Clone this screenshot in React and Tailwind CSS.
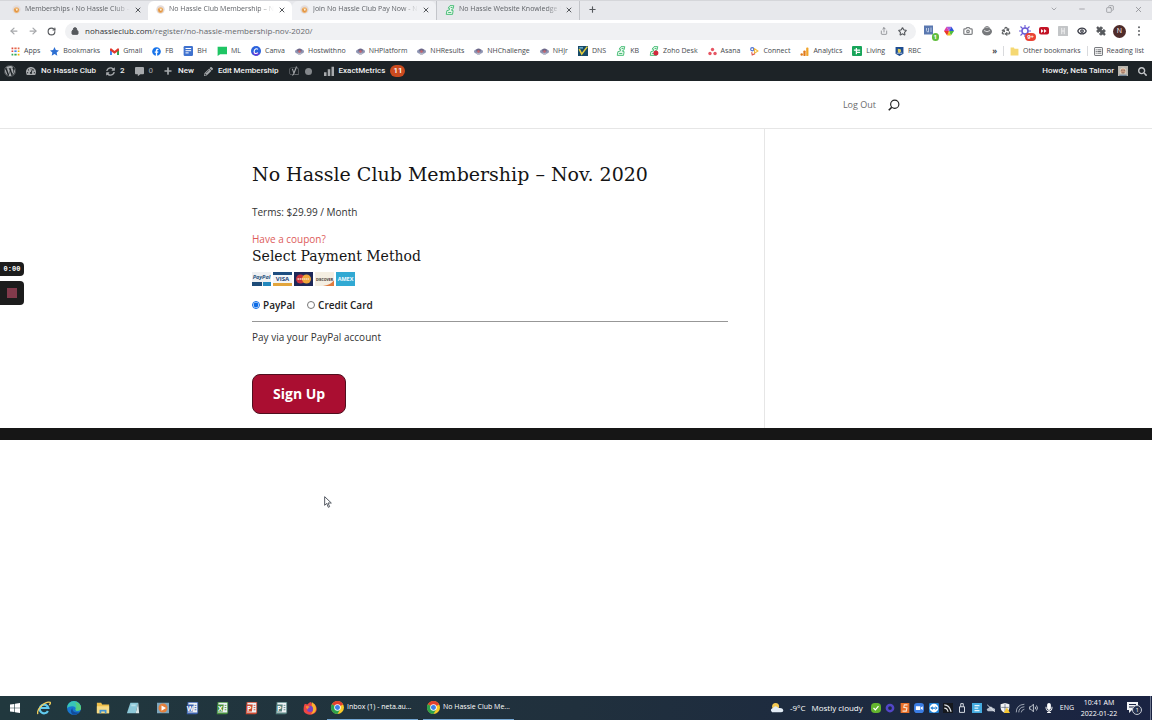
import { useState } from "react";
import {
  ArrowLeft,
  ArrowRight,
  Camera,
  ChevronDown,
  Copy,
  Eye,
  Lock,
  Minus,
  Plus,
  Puzzle,
  Recycle,
  RotateCw,
  Share,
  Star,
  X,
} from "lucide-react";
import {
  FaWordpress,
  FaTachometerAlt,
  FaSyncAlt,
  FaCommentAlt,
  FaPencilAlt,
  FaSearch,
  FaMicrophone,
  FaFacebook,
  FaYoast,
} from "react-icons/fa";

/* ---------- favicons ---------- */

const ClubIcon = () => (
  <svg viewBox="0 0 16 16" className="h-[9px] w-[9px] shrink-0">
    <circle cx="8" cy="8" r="7.500" fill="#e3dcdc" />
    <circle cx="8" cy="9" r="5" fill="#eeb471" />
    <path d="M4 7h8l-1 4-3 2-3-2z" fill="#e0913f" />
    <circle cx="8.500" cy="8.500" r="1.800" fill="#fdf0d6" />
  </svg>
);

const KbIcon = ({ dot }) => (
  <svg viewBox="0 0 16 16" className="h-[10px] w-[10px] shrink-0">
    <path
      d="M8 1h6l-1 5-3 2 3 1-1 6H2l1-6 4-1V5H5z"
      fill="#e6f7ec"
      stroke="#45bd74"
      strokeWidth="1.500"
    />
    <path d="M5 12h5M9 4h3" stroke="#45bd74" strokeWidth="1.500" />
    {dot && <circle cx="11" cy="11" r="4" fill="#d2273c" />}
  </svg>
);

const AppsIcon = () => (
  <svg viewBox="0 0 16 16" className="h-[9px] w-[9px] shrink-0">
    <path d="M1 1h3v3H1zM1 6h3v3H1z" fill="#e0493c" />
    <path d="M6 1h4v3H6zM12 1h3v3h-3z" fill="#e66a4c" />
    <path d="M6 6h4v3H6z" fill="#4285f4" />
    <path d="M12 6h3v3h-3zM12 12h3v3h-3z" fill="#f4b400" />
    <path d="M1 12h3v3H1zM6 12h4v3H6z" fill="#34a853" />
  </svg>
);

const StarIcon = () => (
  <svg viewBox="0 0 16 16" className="h-[9px] w-[9px] shrink-0">
    <path
      d="M8 0l2.4 5.4 5.6.6-4.200 3.900L13 15.500 8 12.600 3 15.500l1.200-5.600L0 6l5.600-.6z"
      fill="#2d6fd2"
    />
  </svg>
);

const GmailIcon = () => (
  <svg viewBox="0 0 16 14" className="h-[9px] w-[9px] shrink-0">
    <path d="M0 3h3.500v10H0z" fill="#4285f4" />
    <path d="M12.500 3H16v10h-3.500z" fill="#34a853" />
    <path d="M0 2l2-1 6 5 6-5 2 1v3l-8 6-8-6z" fill="#e0392d" />
  </svg>
);

const FbIcon = () => (
  <FaFacebook className="h-[9px] w-[9px] shrink-0 text-[#1773ea]" />
);

const DocIcon = () => (
  <svg viewBox="0 0 16 16" className="h-[10px] w-[10px] shrink-0">
    <rect x="1" y="0" width="15" height="16" rx="2" fill="#3f72cf" />
    <path d="M4 4h9M4 7.500h9M4 11h5" stroke="#fff" strokeWidth="1.600" />
  </svg>
);

const MlIcon = () => (
  <svg viewBox="0 0 16 16" className="h-[10px] w-[10px] shrink-0">
    <path d="M1 1h15v12H5l-4 3z" fill="#1fc564" />
  </svg>
);

const CanvaIcon = () => (
  <svg viewBox="0 0 16 16" className="h-[10px] w-[10px] shrink-0">
    <circle cx="8" cy="8" r="8" fill="#2b62dc" />
    <path d="M2 10a7 7 0 0 0 9 5l3-4z" fill="#6b39d6" />
    <path
      d="M11 5.500C9 3 5 5 5 9s4 3.500 6 1.500"
      fill="none"
      stroke="#fff"
      strokeWidth="1.800"
    />
  </svg>
);

const HostIcon = () => (
  <svg viewBox="0 0 16 16" className="h-[9px] w-[9px] shrink-0">
    <ellipse cx="8" cy="8" rx="8" ry="4" fill="#8f95b3" />
    <path d="M4 4q4-3 8 0v4H4z" fill="#6d6788" />
    <circle cx="8" cy="8" r="2.200" fill="#c9646c" />
    <path d="M4 11q4 3 8 0v1q-4 3-8 0z" fill="#7b7f99" />
  </svg>
);

const DnsIcon = () => (
  <svg viewBox="0 0 16 16" className="h-[10px] w-[10px] shrink-0">
    <path d="M0 0h16v16H0z" fill="#174a68" />
    <path d="M2 5l4 8L15 1" fill="none" stroke="#e7cf3d" strokeWidth="2.500" />
    <path d="M2 3h6" stroke="#7fc4df" strokeWidth="2" />
  </svg>
);

const AsanaIcon = () => (
  <svg viewBox="0 0 16 16" className="h-[9px] w-[9px] shrink-0">
    <circle cx="8" cy="4.500" r="3" fill="#e65563" />
    <circle cx="3.500" cy="11.500" r="3" fill="#e65563" />
    <circle cx="12.500" cy="11.500" r="3" fill="#e65563" />
  </svg>
);

const ConnectIcon = () => (
  <svg viewBox="0 0 16 16" className="h-[9px] w-[9px] shrink-0">
    <circle cx="4" cy="4" r="2.800" fill="none" stroke="#4a6fd0" strokeWidth="2" />
    <path d="M8 3l6 4-6 4z" fill="none" stroke="#f0b93d" strokeWidth="2" />
    <path d="M3 9l1 5 5-2" fill="none" stroke="#dc5a4e" strokeWidth="2" />
  </svg>
);

const AnalyticsIcon = () => (
  <svg viewBox="0 0 16 16" className="h-[9px] w-[9px] shrink-0">
    <rect x="11" y="1" width="4" height="15" rx="1.500" fill="#f0a42b" />
    <rect x="6" y="6" width="4" height="10" rx="1.500" fill="#e07a1b" />
    <circle cx="3" cy="13.500" r="2.200" fill="#e07a1b" />
  </svg>
);

const LivingIcon = () => (
  <svg viewBox="0 0 16 16" className="h-[10px] w-[10px] shrink-0">
    <rect width="16" height="16" rx="1.500" fill="#18a55a" />
    <path d="M3 6.500h10M7 3v10M7 10h6" stroke="#fff" strokeWidth="2" />
  </svg>
);

const RbcIcon = () => (
  <svg viewBox="0 0 16 16" className="h-[9px] w-[9px] shrink-0">
    <path d="M1 0h14v12l-7 4-7-4z" fill="#1c4c92" />
    <path d="M5 3l5 1 1 4-4 3-2-3z" fill="#e3cd55" />
    <path d="M3 11h10" stroke="#fff" strokeWidth="1.200" />
  </svg>
);

const tabs = [
  { title: "Memberships ‹ No Hassle Club –", icon: <ClubIcon />, style: "bg-[#e7e8ec]" },
  { title: "No Hassle Club Membership – N", icon: <ClubIcon />, style: "bg-white" },
  { title: "Join No Hassle Club Pay Now - N", icon: <ClubIcon />, style: "bg-[#f0f1f4]" },
  { title: "No Hassle Website Knowledge B", icon: <KbIcon />, style: "bg-[#e7e8ec]" },
];

const bookmarks = [
  { label: "Apps", icon: <AppsIcon /> },
  { label: "Bookmarks", icon: <StarIcon /> },
  { label: "Gmail", icon: <GmailIcon /> },
  { label: "FB", icon: <FbIcon /> },
  { label: "BH", icon: <DocIcon /> },
  { label: "ML", icon: <MlIcon /> },
  { label: "Canva", icon: <CanvaIcon /> },
  { label: "Hostwithno", icon: <HostIcon /> },
  { label: "NHPlatform", icon: <HostIcon /> },
  { label: "NHResults", icon: <HostIcon /> },
  { label: "NHChallenge", icon: <HostIcon /> },
  { label: "NHJr", icon: <HostIcon /> },
  { label: "DNS", icon: <DnsIcon /> },
  { label: "KB", icon: <KbIcon /> },
  { label: "Zoho Desk", icon: <KbIcon dot /> },
  { label: "Asana", icon: <AsanaIcon /> },
  { label: "Connect", icon: <ConnectIcon /> },
  { label: "Analytics", icon: <AnalyticsIcon /> },
  { label: "Living", icon: <LivingIcon /> },
  { label: "RBC", icon: <RbcIcon /> },
];

/* ---------- browser ---------- */

const TabStrip = () => (
  <div className="flex h-5 items-end border-t border-[#d5d6da] bg-[#e7e8ec] pl-1 text-[7px] text-[#5f6267]">
    {tabs.map((tab, i) => (
      <div
        key={tab.title}
        className={`flex h-[19px] w-36 items-center gap-1 pr-1.5 pb-0.5 pl-2 ${tab.style} ${
          i === 3 ? "border-x border-[#c3c5ca]" : "rounded-t-md"
        }`}
      >
        {tab.icon}
        <span className="min-w-0 flex-1 mask-r-from-85% whitespace-nowrap">
          {tab.title}
        </span>
        <button aria-label="Close tab">
          <X className="h-2 w-2 text-[#55585c]" strokeWidth={3} />
        </button>
      </div>
    ))}
    <button aria-label="New tab" className="flex h-[19px] w-6 items-center justify-center pb-0.5">
      <Plus className="h-[9px] w-[9px] text-[#55585c]" strokeWidth={3} />
    </button>
    <div className="ml-auto flex h-4 items-center self-start text-[#85878c]">
      <button aria-label="Search tabs" className="flex w-7 justify-center">
        <ChevronDown className="h-2 w-2" />
      </button>
      <button aria-label="Minimize" className="flex w-7 justify-center">
        <Minus className="h-2 w-2" />
      </button>
      <button aria-label="Restore" className="flex w-7 justify-center">
        <Copy className="h-2 w-2 -scale-x-100" />
      </button>
      <button aria-label="Close" className="flex w-7 justify-center">
        <X className="h-[9px] w-[9px]" />
      </button>
    </div>
  </div>
);

const Slot = ({ label, children }) => (
  <button aria-label={label} className="relative flex h-4 w-[19px] items-center justify-center">
    {children}
  </button>
);

const Toolbar = () => (
  <div className="flex h-[22px] items-center bg-white pr-1 pl-1">
    <Slot label="Back">
      <ArrowLeft className="h-2.5 w-2.5 text-[#a6a8ab]" strokeWidth={3} />
    </Slot>
    <Slot label="Forward">
      <ArrowRight className="h-2.5 w-2.5 text-[#a6a8ab]" strokeWidth={3} />
    </Slot>
    <Slot label="Reload">
      <RotateCw className="h-[9px] w-[9px] text-[#54575b]" strokeWidth={3} />
    </Slot>
    <div className="ml-1 flex h-[17px] flex-1 items-center rounded-full bg-[#f0f1f3] pr-1 pl-1.5">
      <Lock className="h-2 w-2 text-[#55585c]" fill="#55585c" strokeWidth={3} />
      <span className="ml-1.5 flex-1 text-[8px] text-[#66696e]">
        <span className="text-[#303236]">nohassleclub.com</span>
        /register/no-hassle-membership-nov-2020/
      </span>
      <Slot label="Share">
        <Share className="h-2 w-2 text-[#6b6e72]" />
      </Slot>
      <Slot label="Bookmark">
        <Star className="h-[9px] w-[9px] text-[#55585c]" strokeWidth={3} />
      </Slot>
    </div>
    <div className="ml-1 flex">
      <Slot label="Tag manager">
        <svg viewBox="0 0 24 24" className="h-3 w-3">
          <path d="M0 1h18v18H0z" fill="#5a78b0" />
          <path d="M5 6v5q0 3 4 3V6M14 5v9" stroke="#b9c8e4" strokeWidth="2" fill="none" />
        </svg>
        <span className="absolute right-0 -bottom-0.5 h-2 rounded-sm bg-[#5fbd3c] px-0.5 text-[6px] leading-2 font-bold text-white">
          1
        </span>
      </Slot>
      <Slot label="Color picker">
        <svg viewBox="0 0 16 16" className="h-2.5 w-2.5">
          <path d="M8 8L4 1l8 0z" fill="#a45be0" />
          <path d="M8 8L12 1l4 7z" fill="#2e56da" />
          <path d="M8 8h8l-5 7z" fill="#4fbd3c" />
          <path d="M8 8l3 7-6 0z" fill="#e9c31c" />
          <path d="M8 8l-3 7-5-7z" fill="#ea3a24" />
          <path d="M8 8H0l4-7z" fill="#e03ca0" />
        </svg>
      </Slot>
      <Slot label="Screenshot">
        <Camera className="h-2.5 w-2.5 text-[#808285]" strokeWidth={3} />
      </Slot>
      <Slot label="Responsive view">
        <svg viewBox="0 0 20 20" className="h-2.5 w-2.5">
          <ellipse cx="10" cy="11" rx="10" ry="8" fill="#77797c" />
          <path d="M5 3q5-4 10 0" stroke="#77797c" strokeWidth="2" fill="none" />
          <path d="M4 9q6 5 12 0" stroke="#d8d9db" strokeWidth="2" fill="none" />
        </svg>
      </Slot>
      <Slot label="Clear cache">
        <Recycle className="h-2.5 w-2.5 text-[#606366]" strokeWidth={3} />
      </Slot>
      <Slot label="Loom">
        <svg viewBox="0 0 16 16" className="h-3 w-3">
          <path
            d="M8 0v16M0 8h16M2 2l12 12M14 2L2 14"
            stroke="#6b5bd6"
            strokeWidth="1.500"
          />
          <circle cx="8" cy="8" r="4" fill="#fff" stroke="#6b5bd6" strokeWidth="2" />
        </svg>
        <span className="absolute -right-0.5 -bottom-0.5 h-2 rounded-sm bg-[#ea4335] px-0.5 text-[6px] leading-2 font-bold text-white">
          9+
        </span>
      </Slot>
      <Slot label="Video speed">
        <svg viewBox="0 0 20 16" className="h-2 w-2.5">
          <rect width="20" height="15" rx="4" fill="#c31426" />
          <path d="M4 4l5 4-5 4zM10 4l5 4-5 4z" fill="#fff" />
        </svg>
      </Slot>
      <Slot label="Honey">
        <svg viewBox="0 0 16 16" className="h-2.5 w-2.5">
          <rect width="16" height="16" rx="1" fill="#c3c5c7" />
          <path d="M6 3v10M10 3v10M6 8h4" stroke="#f2f2f3" strokeWidth="1.500" />
        </svg>
      </Slot>
      <Slot label="Reader">
        <Eye className="h-2.5 w-2.5 text-[#3c3e48]" strokeWidth={3} />
      </Slot>
      <Slot label="Extensions">
        <Puzzle className="h-2.5 w-2.5 -scale-x-100 text-[#55585c]" fill="#55585c" />
      </Slot>
      <Slot label="Profile">
        <span className="flex h-[13px] w-[13px] items-center justify-center rounded-full bg-[#4f2c2a] text-[7px] text-white">
          N
        </span>
      </Slot>
      <Slot label="Menu">
        <svg viewBox="0 0 4 16" className="h-2.5 w-1" fill="#55585c">
          <circle cx="2" cy="2" r="1.500" />
          <circle cx="2" cy="8" r="1.500" />
          <circle cx="2" cy="14" r="1.500" />
        </svg>
      </Slot>
    </div>
  </div>
);

const BookmarksBar = () => (
  <nav className="flex h-[19px] items-center bg-white pr-2 pb-px pl-[11px] text-[7px] text-[#45484c]">
    <div className="flex flex-1 gap-2.5">
      {bookmarks.map((b) => (
        <a key={b.label} href="#" className="flex items-center gap-1 whitespace-nowrap">
          {b.icon}
          {b.label}
        </a>
      ))}
    </div>
    <button aria-label="More bookmarks" className="mr-1.5 text-[8px] leading-3 font-bold">
      »
    </button>
    <a href="#" className="flex items-center gap-1 border-l border-[#d9dadd] px-1.5">
      <svg viewBox="0 0 16 16" className="h-[9px] w-[9px]">
        <path d="M1 1h6l1 2h7v12H1z" fill="#f5d873" />
      </svg>
      Other bookmarks
    </a>
    <a href="#" className="flex items-center gap-1 border-l border-[#d9dadd] pl-1.5">
      <svg viewBox="0 0 16 16" className="h-[9px] w-[9px]">
        <rect x="1" y="1" width="14" height="14" rx="1" fill="none" stroke="#55585c" strokeWidth="1.500" />
        <path d="M3 5h2M6 5h7M3 8h2M6 8h7M3 11h2M6 11h7" stroke="#55585c" strokeWidth="1.500" />
      </svg>
      Reading list
    </a>
  </nav>
);

/* ---------- WordPress admin bar ---------- */

const AdminBar = () => (
  <div className="flex h-5 items-center bg-[#1d2327] px-1 font-[Roboto,sans-serif] text-[8px] font-medium text-[#f0f0f1]">
    <a href="#" aria-label="About WordPress">
      <FaWordpress className="h-3 w-3 text-[#a7aaad]" />
    </a>
    <a href="#" className="ml-2.5 flex items-center gap-[5px]">
      <FaTachometerAlt className="h-2.5 w-2.5 text-[#a7aaad]" />
      No Hassle Club
    </a>
    <a href="#" className="ml-2.5 flex items-center gap-[5px]">
      <FaSyncAlt className="h-[9px] w-[9px] text-[#a7aaad]" />2
    </a>
    <a href="#" className="ml-2.5 flex items-center gap-[5px] text-[#8f9398]">
      <FaCommentAlt className="h-[9px] w-[9px] text-[#a7aaad]" />0
    </a>
    <a href="#" className="ml-2.5 flex items-center gap-[5px]">
      <Plus className="h-2.5 w-2.5 text-[#a7aaad]" strokeWidth={4} />
      New
    </a>
    <a href="#" className="ml-2.5 flex items-center gap-[5px]">
      <FaPencilAlt className="h-[9px] w-[9px] text-[#a7aaad]" />
      Edit Membership
    </a>
    <a href="#" aria-label="SEO" className="ml-2.5 flex items-center gap-1.5">
      <FaYoast className="h-2.5 w-2.5 text-[#a7aaad]" />
      <span className="h-[7px] w-[7px] rounded-full bg-[#84888c]" />
    </a>
    <a href="#" className="ml-3 flex items-center gap-[5px]">
      <svg viewBox="0 0 16 16" className="h-2.5 w-2.5" fill="#a7aaad">
        <path d="M0 10h4v6H0zM6 5h4v11H6zM12 1h4v15h-4z" />
      </svg>
      ExactMetrics
      <span className="rounded-full bg-[#ca4a1f] px-[3px] leading-3 text-white">11</span>
    </a>
    <a href="#" className="ml-auto flex items-center gap-1">
      Howdy, Neta Talmor
      <svg viewBox="0 0 16 16" className="h-2.5 w-2.5">
        <path d="M0 0h16v16H0z" fill="#b9b5ad" />
        <path d="M3 5q5-5 10 0v7H3z" fill="#ddd4c4" />
        <circle cx="8" cy="8" r="4" fill="#c99a80" />
        <path d="M5 7h2M9 7h2M6 11h4" stroke="#6b5550" />
        <path d="M2 14h12v2H2z" fill="#6f8296" />
      </svg>
    </a>
    <button aria-label="Search" className="mr-px ml-2.5">
      <FaSearch className="h-[9px] w-[9px] text-[#c3c5c8]" />
    </button>
  </div>
);

/* ---------- membership page ---------- */

const CardLogos = () => (
  <div className="mt-2 flex gap-0.5">
    <svg viewBox="0 0 38 28" className="h-3.5 w-[19px]">
      <path d="M0 0h38v28H0z" fill="#eef0f2" />
      <path d="M0 20h20v8H0z" fill="#1c4b78" />
      <path d="M22 20h16v8H22z" fill="#2288bd" />
      <text x="19" y="14" textAnchor="middle" fontSize="11" fontWeight="bold" fontStyle="italic" fill="#28547f" fontFamily="Open Sans, sans-serif">
        PayPal
      </text>
    </svg>
    <svg viewBox="0 0 38 28" className="h-3.5 w-[19px]">
      <path d="M0 0h38v28H0z" fill="#f3f5f7" />
      <path d="M0 0h38v6H0z" fill="#1d4d80" />
      <path d="M0 22h38v6H0z" fill="#e2a53c" />
      <text x="19" y="18" textAnchor="middle" fontSize="12" fontWeight="bold" fill="#1d4478" fontFamily="Open Sans, sans-serif">
        VISA
      </text>
    </svg>
    <svg viewBox="0 0 38 28" className="h-3.5 w-[19px]">
      <path d="M0 0h38v28H0z" fill="#1d2858" />
      <circle cx="13" cy="14" r="9" fill="#c9303e" />
      <circle cx="25" cy="14" r="9" fill="#f0a63a" />
      <path d="M7 14h24" stroke="#f4d9bd" strokeWidth="3" strokeDasharray="3 1" />
    </svg>
    <svg viewBox="0 0 38 28" className="h-3.5 w-[19px]">
      <path d="M0 0h38v28H0z" fill="#f4eee2" />
      <path d="M38 17v11H16q14-2 22-11z" fill="#e07b3e" />
      <text x="19" y="17" textAnchor="middle" fontSize="7" fontWeight="bold" fill="#3c302c" fontFamily="Open Sans, sans-serif">
        DISCOVER
      </text>
    </svg>
    <svg viewBox="0 0 38 28" className="h-3.5 w-[19px]">
      <path d="M0 0h38v28H0z" fill="#31a9d3" />
      <text x="19" y="18" textAnchor="middle" fontSize="11" fontWeight="bold" fill="#f2fbff" fontFamily="Open Sans, sans-serif">
        AMEX
      </text>
    </svg>
  </div>
);

const MembershipForm = () => {
  const [method, setMethod] = useState("paypal");

  return (
    <form
      onSubmit={(e) => e.preventDefault()}
      className="text-[10px] leading-[18px] text-[#333]"
    >
      <p className="mt-3.5">Terms: $29.99 / Month</p>
      <a href="#" className="mt-[9px] block w-fit text-[#dd5b5b]">
        Have a coupon?
      </a>
      <h2 className="font-[DejaVu_Serif,serif] text-[14px] leading-4 text-[#151515]">
        Select Payment Method
      </h2>
      <CardLogos />
      <div className="mt-2.5 flex gap-3 font-semibold text-[#222]">
        <label className="flex items-center gap-[3px]">
          <input
            type="radio"
            name="method"
            className="h-2 w-2 accent-[#0b6be6]"
            checked={method === "paypal"}
            onChange={() => setMethod("paypal")}
          />
          PayPal
        </label>
        <label className="flex items-center gap-[3px]">
          <input
            type="radio"
            name="method"
            className="h-2 w-2 accent-[#0b6be6]"
            checked={method === "card"}
            onChange={() => setMethod("card")}
          />
          Credit Card
        </label>
      </div>
      <hr className="mt-[7px] border-[#979797]" />
      <p className="mt-1.5">Pay via your PayPal account</p>
      <button
        type="submit"
        className="mt-7 h-10 rounded-lg border border-[#4f0f1e] bg-[#aa0e31] px-5 text-[14px] font-bold text-white"
      >
        Sign Up
      </button>
    </form>
  );
};

const Page = () => (
  <div className="relative flex-1 bg-white">
    <header className="border-b border-[#e6e6e6]">
      <div className="mx-auto flex h-[47px] w-[56.25%] items-center justify-end gap-3">
        <a href="#" className="text-[9px] font-medium text-[#6b6b6b]">
          Log Out
        </a>
        <button aria-label="Search">
          <svg viewBox="0 0 16 16" className="h-3 w-3" fill="none" stroke="#222" strokeWidth="1.500">
            <circle cx="9" cy="7" r="5.500" />
            <path d="M5 11l-4 4" strokeWidth="2.200" />
          </svg>
        </button>
      </div>
    </header>
    <div className="mx-auto w-[56.25%]">
      <main className="w-[79.125%] border-r border-[#e6e6e6] pt-[30px] pr-9 pb-3.5">
        <h1 className="font-[DejaVu_Serif,serif] text-[19px] leading-[30px] whitespace-nowrap text-[#151515]">
          No Hassle Club Membership – Nov. 2020
        </h1>
        <MembershipForm />
      </main>
    </div>
    <footer className="h-3 bg-[#161616]" />

    {/* screen recorder controls */}
    <div className="absolute top-[181px] left-0 flex w-6 flex-col gap-[5px]">
      <span className="rounded-r-sm bg-[#1c1c1c] text-center font-[Liberation_Mono,monospace] text-[7px] leading-[14px] font-bold text-white">
        0:00
      </span>
      <button
        aria-label="Stop recording"
        className="flex h-6 items-center justify-center rounded-r-sm bg-[#1c1c1c]"
      >
        <span className="h-2.5 w-2.5 bg-[#823a4b]" />
      </button>
    </div>

    {/* mouse pointer */}
    <svg viewBox="0 0 12 18" className="absolute top-[415px] left-[324px] h-3 w-2">
      <path
        d="M1 1v13l3-3 2.500 6 2-1L6 10.500h5z"
        fill="#fff"
        stroke="#555a63"
        strokeWidth="1.500"
      />
    </svg>
  </div>
);

/* ---------- taskbar ---------- */

const OfficeIcon = ({ color, letter }) => (
  <svg viewBox="0 0 16 16" className="h-3.5 w-3.5">
    <path d="M3 1h12v13l-2 1H2z" fill={color} />
    <path d="M4 2h10v11H3z" fill="#eef2f5" />
    <path d="M11 5h2M11 7.500h2M11 10h2" stroke={color} />
    <path d="M3 4h7l-1 8H2z" fill={color} />
    <text x="6" y="11" textAnchor="middle" fontSize="8" fontWeight="bold" fill="#fff" fontFamily="Open Sans, sans-serif">
      {letter}
    </text>
  </svg>
);

const ChromeIcon = () => (
  <svg viewBox="0 0 24 24" className="h-[13px] w-[13px] shrink-0">
    <circle cx="12" cy="12" r="12" fill="#f9c927" />
    <path d="M12 12L1.600 6a12 12 0 0 1 20.800 0z" fill="#e3402f" />
    <path d="M12 12L1.600 6A12 12 0 0 0 12 24l5-9z" fill="#2da24c" />
    <path d="M12 6h10.400L12 12z" fill="#e3402f" />
    <circle cx="12" cy="12" r="6" fill="#fff" />
    <circle cx="12" cy="12" r="4.600" fill="#3f7fe8" />
  </svg>
);

const launchers = [
  {
    label: "Start",
    icon: (
      <svg viewBox="0 0 16 16" className="h-2.5 w-2.5" fill="#fff">
        <path d="M0 2.500l7-1V7.500H0zM8 1.300L16 0v7.500H8zM0 8.500h7v6l-7-1zM8 8.500h8V16l-8-1.200z" />
      </svg>
    ),
  },
  {
    label: "Internet Explorer",
    icon: (
      <svg viewBox="0 0 16 16" className="h-3.5 w-3.5" fill="none">
        <path d="M12.500 11.500A5 5 0 1 1 13 8H4" stroke="#62cbee" strokeWidth="2.500" />
        <path d="M1 15C-1 10 9 0 15 1.500q1 1-1 3" stroke="#f2cf5b" strokeWidth="1.500" />
      </svg>
    ),
  },
  {
    label: "Edge",
    icon: (
      <svg viewBox="0 0 16 16" className="h-3.5 w-3.5">
        <circle cx="8" cy="8" r="8" fill="#1977cf" />
        <path d="M0 8a8 8 0 0 1 16 0q0 3-4 3-3 0-2-2 0-3-4-3-4 0-6 2z" fill="#38c5b8" />
        <path d="M9 1q7 1 7 7 0 3-4 3-3 0-2-2 2-4-1-8z" fill="#57cf7c" />
        <path d="M6 8q0 6 8 5-4 4-8 2-3-3 0-7z" fill="#124d9c" />
      </svg>
    ),
  },
  {
    label: "File Explorer",
    icon: (
      <svg viewBox="0 0 16 16" className="h-3.5 w-3.5">
        <path d="M1 2h5l1 2h8v10H1z" fill="#eebf4b" />
        <path d="M1 6h14v8H1z" fill="#f8dc86" />
        <path d="M4 10h8v4h-2v-2H6v2H4z" fill="#4294d4" />
      </svg>
    ),
  },
  {
    label: "Notepad",
    icon: (
      <svg viewBox="0 0 16 16" className="h-3.5 w-3.5">
        <path d="M5 2h9l-3 12H1z" fill="#8dc8d8" />
        <path d="M14 2l1 12h-4z" fill="#d9e6e8" />
        <path d="M6 5h5" stroke="#b9e1ea" strokeWidth="2" />
      </svg>
    ),
  },
  {
    label: "Media Player",
    icon: (
      <svg viewBox="0 0 16 16" className="h-3 w-3">
        <path d="M0 1h16v14H0z" fill="#7da6bd" />
        <circle cx="8" cy="8" r="6" fill="#e5803c" />
        <path d="M6 4.500l6 3.500-6 3.500z" fill="#fff" />
      </svg>
    ),
  },
  { label: "Word", icon: <OfficeIcon color="#3c62ae" letter="W" /> },
  { label: "Excel", icon: <OfficeIcon color="#47913f" letter="X" /> },
  { label: "PowerPoint", icon: <OfficeIcon color="#cc4a32" letter="P" /> },
  { label: "Publisher", icon: <OfficeIcon color="#55817f" letter="P" /> },
  {
    label: "Firefox",
    icon: (
      <svg viewBox="0 0 16 16" className="h-3.5 w-3.5">
        <path d="M2 3l3 1q2-3 4-3 0 2 3 3l1-1q4 5 2 9a8 7 0 0 1-14 0Q0 7 2 3z" fill="#ee4744" />
        <path d="M10 1q5 3 5 8-1 5-6 6 4-4 1-8z" fill="#f8b52d" />
        <circle cx="8" cy="9" r="3.500" fill="#7a44c2" />
        <path d="M3 6q3-1 5 1-3 0-2 3-3-1-3-4z" fill="#fb8a33" />
      </svg>
    ),
  },
];

const windows = ["Inbox (1) - neta.au...", "No Hassle Club Me..."];

const tray = [
  <svg viewBox="0 0 16 16" className="h-2.5 w-2.5">
    <rect width="16" height="16" rx="6" fill="#63b52e" />
    <path d="M4 8l3 3 5-6" stroke="#fff" strokeWidth="2" fill="none" />
  </svg>,
  <svg viewBox="0 0 16 16" className="h-2.5 w-2.5">
    <circle cx="8" cy="8" r="5" fill="none" stroke="#5246c8" strokeWidth="4" />
  </svg>,
  <svg viewBox="0 0 16 16" className="h-2.5 w-2.5">
    <path d="M1 0h14v16H1z" fill="#e8702a" />
    <path d="M12 3H7l-1 4 5 1-1 5H4" stroke="#fbe3cf" strokeWidth="1.800" fill="none" />
  </svg>,
  <svg viewBox="0 0 16 16" className="h-2.5 w-2.5">
    <rect width="16" height="16" rx="5" fill="#3b7de4" />
    <path d="M3 5h7v6H3zM11 7l3-2v6l-3-2z" fill="#fff" />
  </svg>,
  <svg viewBox="0 0 16 16" className="h-2.5 w-2.5">
    <rect width="16" height="16" rx="2" fill="#1f80d4" />
    <circle cx="8" cy="8" r="7" fill="#fff" />
    <path d="M2 8l4-3v6zM14 8l-4-3v6zM5 7h6v2H5z" fill="#1f80d4" />
  </svg>,
  <svg viewBox="0 0 16 16" className="h-2.5 w-2.5">
    <path d="M0 0h16v16H0z" fill="#15181d" />
    <path d="M2 3q8 0 11 11M2 8q5 0 6 6" stroke="#dfe2e5" strokeWidth="2" fill="none" />
  </svg>,
  <svg viewBox="0 0 16 16" className="h-2.5 w-2.5" fill="none" stroke="#dfe3ea" strokeWidth="1.500">
    <path d="M4 6h8v9H4zM6 6V1h4v5" />
  </svg>,
  <svg viewBox="0 0 16 16" className="h-2.5 w-2.5">
    <path d="M0 0h16v16H0z" fill="#45abdf" />
    <path d="M4 4h8M4 8h6M4 12h8" stroke="#e6f5fc" strokeWidth="2" />
  </svg>,
  <svg viewBox="0 0 16 16" className="h-2.5 w-2.5" fill="#b9c0cc">
    <path d="M3 13q-4-3 1-5 4-5 7 0 5 0 3 5z" />
    <path d="M2 3l12 11" stroke="#e4e7ec" strokeWidth="1.500" />
  </svg>,
  <svg viewBox="0 0 16 16" className="h-2.5 w-2.5">
    <path d="M8 0l7 2v5q0 6-7 9-7-3-7-9V2z" fill="#f2f3f5" />
    <path d="M8 1v14M2 7h12" stroke="#47536d" />
    <path d="M11 7l5 9H6z" fill="#f3c431" />
  </svg>,
  <svg viewBox="0 0 16 16" className="h-2.5 w-2.5" fill="none" stroke="#a5adba" strokeWidth="1.500">
    <path d="M2 15Q2 3 15 2M6 15q0-8 9-9M10 15q0-4 5-5" />
  </svg>,
  <svg viewBox="0 0 16 16" className="h-2.5 w-2.5" fill="none" stroke="#e4e7ec" strokeWidth="1.300">
    <path d="M1 6h2l4-4v12l-4-4H1zM10 6q1 2 0 4M12 4q3 4 0 8" />
  </svg>,
  <FaMicrophone className="h-2.5 w-2.5 text-white" />,
];

const Taskbar = () => (
  <div className="flex h-6 bg-gradient-to-r from-[#21383e] via-[#20303d] to-[#1a2342] text-[8px] text-white">
    <div className="flex w-[325px]">
      {launchers.map((l) => (
        <button key={l.label} aria-label={l.label} className="flex flex-1 items-center justify-center">
          {l.icon}
        </button>
      ))}
    </div>
    <div className="ml-0.5 flex gap-[5px]">
      {windows.map((title) => (
        <button
          key={title}
          className="flex w-[91px] items-center gap-[3px] border-b border-[#76a9d6] pl-1 text-[7px] whitespace-nowrap"
        >
          <ChromeIcon />
          {title}
        </button>
      ))}
    </div>
    <div className="ml-auto flex items-center whitespace-nowrap">
      <svg viewBox="0 0 20 16" className="h-3 w-3.5">
        <circle cx="8" cy="6" r="5" fill="#f4c952" />
        <path d="M3 14q-4-4 1-6 4-5 8 0 7-1 7 4 0 2-3 2z" fill="#e3ecf5" />
      </svg>
      <span className="ml-1.5">-9°C</span>
      <span className="mr-1.5 ml-1.5">Mostly cloudy</span>
      <div className="flex w-[187px]">
        {tray.map((icon, i) => (
          <span key={i} className="flex flex-1 justify-center">
            {icon}
          </span>
        ))}
      </div>
      <span className="ml-1 text-[7px]">ENG</span>
      <div className="w-[50px] text-center text-[7px] leading-[11px]">
        10:41 AM
        <br />
        2022-01-22
      </div>
      <button aria-label="Notifications" className="relative mr-2 ml-0.5 h-3.5 w-4">
        <svg viewBox="0 0 16 14" className="h-3.5 w-4">
          <path d="M1 1h11v8H6l-3 3V9H1z" fill="#f1f3f6" />
          <path d="M3 3.500h7M3 6h7" stroke="#1a2342" />
          <circle cx="11" cy="9" r="4.500" fill="#25304c" stroke="#c5cad4" />
        </svg>
        <span className="absolute right-[3px] bottom-0 text-[6px] leading-[9px]">1</span>
      </button>
      <span className="h-6 border-l border-[#6f7890] pr-px" />
    </div>
  </div>
);

const App = () => (
  <div className="flex min-h-screen flex-col bg-white font-[Open_Sans,sans-serif]">
    <TabStrip />
    <Toolbar />
    <BookmarksBar />
    <AdminBar />
    <Page />
    <Taskbar />
  </div>
);

export default App;
